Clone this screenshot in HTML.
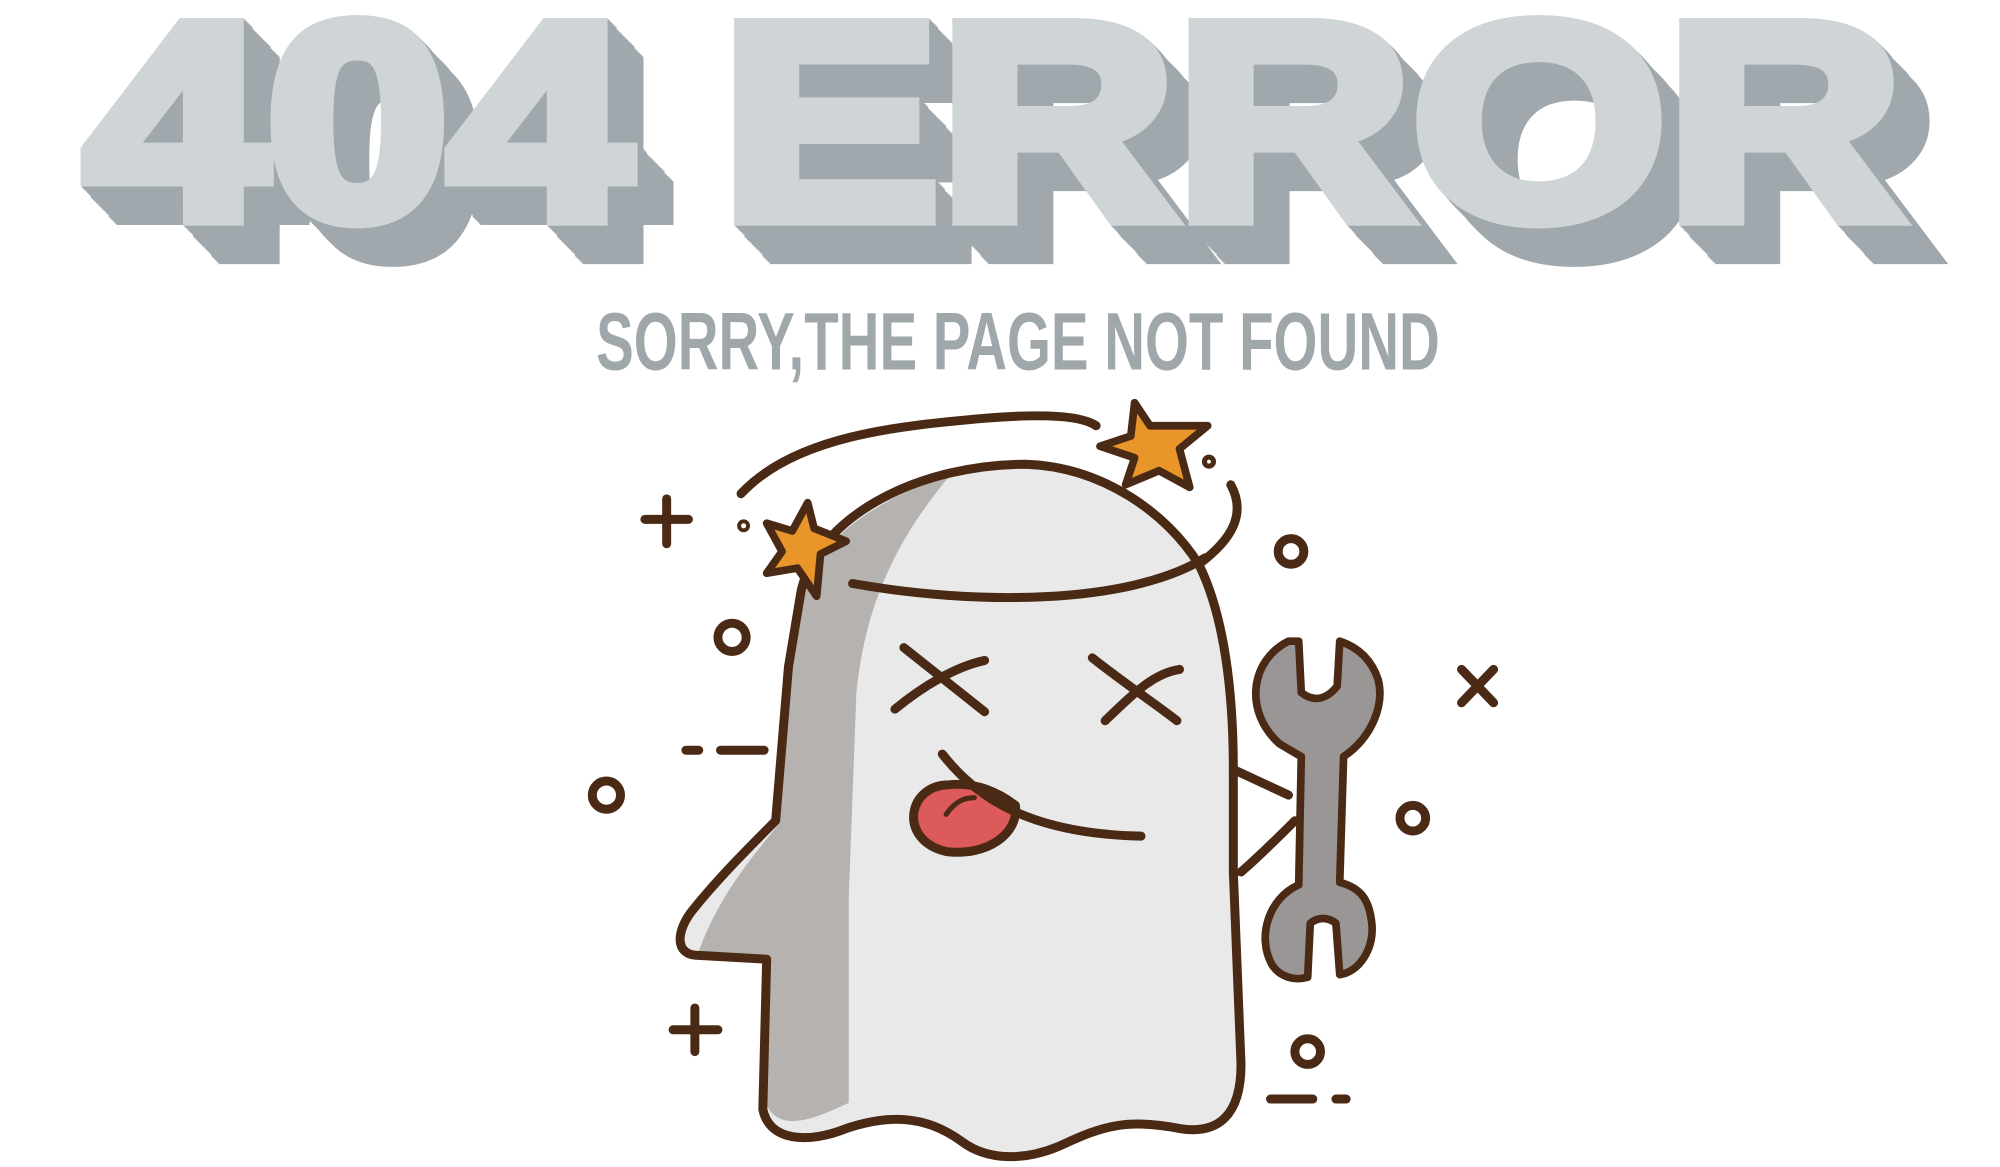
<!DOCTYPE html>
<html><head><meta charset="utf-8"><style>
html,body{margin:0;padding:0;background:#fff;width:2000px;height:1167px;overflow:hidden}
svg{display:block}
</style></head><body>
<svg width="2000" height="1167" viewBox="0 0 1560 910" preserveAspectRatio="none" xmlns="http://www.w3.org/2000/svg">
<defs>
<g id="t"><text x="66" y="170" font-family="Liberation Sans, sans-serif" font-weight="bold" font-size="218" textLength="1418" lengthAdjust="spacingAndGlyphs" stroke-width="12" stroke-linejoin="miter">404 ERROR</text></g>
</defs>
<g fill="#a0a8ad" stroke="#a0a8ad">
<use href="#t" x="28" y="30"/><use href="#t" x="27" y="29"/><use href="#t" x="26" y="28"/><use href="#t" x="25" y="27"/><use href="#t" x="24" y="26"/><use href="#t" x="23" y="25"/><use href="#t" x="22" y="24"/><use href="#t" x="21" y="22"/><use href="#t" x="20" y="21"/><use href="#t" x="19" y="20"/><use href="#t" x="18" y="19"/><use href="#t" x="17" y="18"/><use href="#t" x="16" y="17"/><use href="#t" x="15" y="16"/><use href="#t" x="14" y="15"/><use href="#t" x="13" y="14"/><use href="#t" x="12" y="13"/><use href="#t" x="11" y="12"/><use href="#t" x="10" y="11"/><use href="#t" x="9" y="10"/><use href="#t" x="8" y="9"/><use href="#t" x="7" y="7"/><use href="#t" x="6" y="6"/><use href="#t" x="5" y="5"/><use href="#t" x="4" y="4"/><use href="#t" x="3" y="3"/><use href="#t" x="2" y="2"/><use href="#t" x="1" y="1"/>
</g>
<g fill="#cfd4d7" stroke="#cfd4d7"><use href="#t"/></g>

<text x="465" y="288" font-family="Liberation Sans Narrow, Liberation Sans, sans-serif" font-weight="bold" font-size="64" fill="#a0a7ab" textLength="658" lengthAdjust="spacingAndGlyphs">SORRY,THE PAGE NOT FOUND</text>

<g stroke="#4a2a14" stroke-width="7" stroke-linecap="round" stroke-linejoin="round" fill="none">
<path fill="#e9e9e9" stroke="none" d="M625 460 C640 400 720 362 800 362 C860 364 910 400 935 440 C955 480 962 540 962 600 L962 680 L968 830 C968 870 950 885 920 880 C880 872 860 878 830 892 C800 906 770 905 750 890 C720 868 690 870 660 880 C630 892 600 890 595 865 L598 748 L545 745 C525 745 528 725 540 710 C560 685 585 660 605 640 L615 520 Z"/>
<path stroke="none" fill="#b5b2b0" d="M628 455 C640 420 690 385 740 372 C700 420 675 470 668 540 L662 700 L662 860 C640 870 610 885 598 862 L600 748 L545 742 C560 700 585 670 608 642 L617 520 Z"/>
<path d="M625 460 C640 400 720 362 800 362 C860 364 910 400 935 440 C955 480 962 540 962 600 L962 680 L968 830 C968 870 950 885 920 880 C880 872 860 878 830 892 C800 906 770 905 750 890 C720 868 690 870 660 880 C630 892 600 890 595 865 L598 748 L545 745 C525 745 528 725 540 710 C560 685 585 660 605 640 L615 520 Z"/>
<path d="M665 455 C760 472 880 472 940 435"/>
<path d="M578 385 C620 340 700 332 770 326 C820 322 845 325 855 332"/>
<path d="M960 378 C972 400 962 420 935 440"/>
<path d="M705 505 L768 555 M698 553 C720 535 745 520 768 515"/>
<path d="M852 513 C880 535 900 548 918 562 M862 562 C885 540 900 525 920 522"/>
<path fill="#dd5a5a" d="M740 612 C708 612 700 655 738 664 C770 668 795 650 792 628 C775 615 758 610 740 612 Z"/>
<path d="M735 588 C760 620 800 650 890 652"/>
<path stroke-width="4" d="M738 635 C745 625 752 622 760 622"/>
<path d="M962 600 L1005 620 M968 680 C985 665 1000 650 1010 640"/>
<path fill="#9a9696" stroke-width="6" d="M1005 500 C975 515 970 555 998 580 L1015 590 L1013 690 C990 700 980 730 992 752 C998 762 1010 765 1020 762 L1022 720 C1028 715 1036 715 1042 720 L1045 760 C1060 758 1072 740 1070 720 C1068 700 1060 692 1045 688 L1048 590 C1070 575 1080 550 1075 530 C1070 515 1060 505 1045 500 L1043 535 C1035 545 1025 548 1015 540 L1013 500 Z"/>
<path fill="#e8962a" stroke-width="6" d="M630 392 L635 412 L660 422 L640 432 L637 465 L622 443 L598 447 L610 430 L598 408 L618 414 Z"/>
<path fill="#e8962a" stroke-width="6" d="M885 314 L897 332 L942 332 L920 350 L928 380 L904 367 L878 378 L885 357 L858 348 L882 340 Z"/>
<path d="M503 405 L537 405 M520 389 L520 424"/>
<path d="M525 803 L560 803 M542 786 L542 820"/>
<path d="M1140 522 L1165 548 M1165 522 L1140 548"/>
<path d="M535 585 L545 585 M562 585 L596 585"/>
<path d="M991 857 L1024 857 M1042 857 L1050 857"/>
<circle cx="571" cy="497" r="11"/>
<circle cx="473" cy="620" r="11"/>
<circle cx="1007" cy="430" r="10"/>
<circle cx="1102" cy="638" r="10"/>
<circle cx="1020" cy="820" r="10"/>
<circle cx="580" cy="410" r="1.5"/>
<circle cx="943" cy="360" r="2"/>
</g>
</svg>
</body></html>
